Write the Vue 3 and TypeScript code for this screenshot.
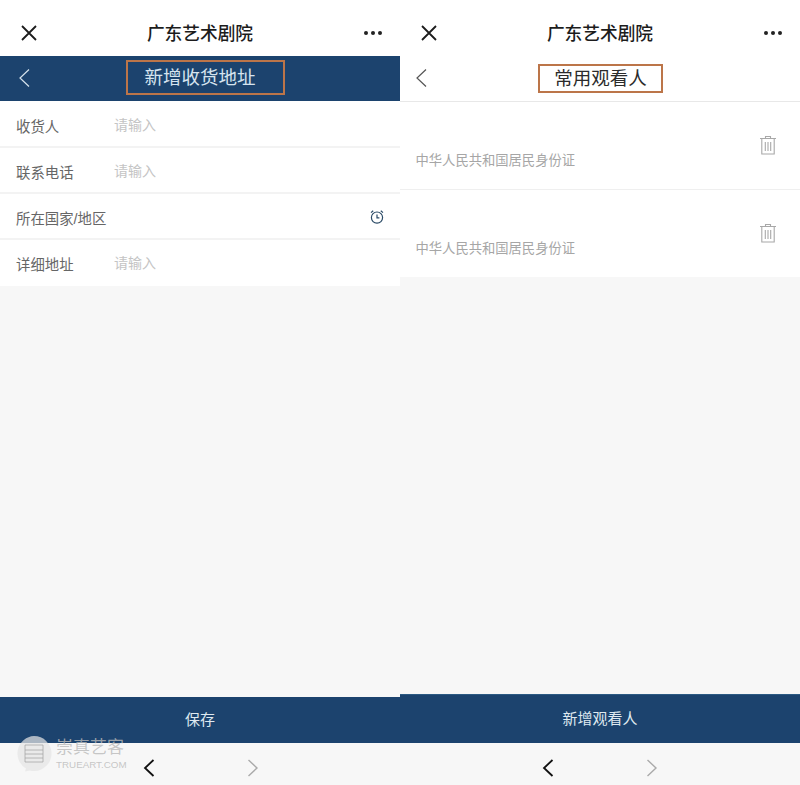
<template>
  <div class="page">
    <section class="panel">
      <div class="wx-bar">
        <svg class="wx-close" width="18" height="18" viewBox="0 0 18 18"><path d="M2 2l14 14M16 2L2 16" /></svg>
        <span class="wx-title">广东艺术剧院</span>
        <span class="wx-more"><i /><i /><i /></span>
      </div>
      <header class="head head-blue">
        <svg class="back" width="13" height="20" viewBox="0 0 13 20"><path d="M11 1.5L2 10l9 8.5" /></svg>
        <h1 class="head-title boxed boxed-blue">新增收货地址</h1>
      </header>
      <ul class="form">
        <li v-for="row in addressRows" :key="row.label" class="form-row">
          <span class="form-label">{{ row.label }}</span>
          <span v-if="row.input" class="form-input">请输入</span>
          <svg v-else class="clock" width="16" height="16" viewBox="0 0 16 16">
            <circle cx="8" cy="8.6" r="5.6" />
            <path d="M8 5.600v3.200h2.400M2 3.600l2.200-1.800M14 3.600l-2.200-1.800" />
          </svg>
        </li>
      </ul>
      <div class="fill" />
      <button class="action action-save">保存</button>
      <nav class="browser-nav browser-nav-left">
        <svg class="nav-arrow" width="14" height="20" viewBox="0 0 14 20"><path d="M11.500 2L3 10l8.500 8" /></svg>
        <svg class="nav-arrow off" width="14" height="20" viewBox="0 0 14 20"><path d="M2.500 2L11 10l-8.500 8" /></svg>
      </nav>
      <div class="watermark">
        <svg class="wm-bubble" width="38" height="38" viewBox="0 0 38 38">
          <path class="wm-shape" d="M19 1a17.500 17.500 0 1 1 0 35c-2 0-3 0-4-.500-2 0-4 1-5 1l1-3A17.500 17.500 0 0 1 19 1z" />
          <path class="wm-lines" d="M10 10h18v17H10zM10 15h18M10 19h18M10 23h18" />
        </svg>
        <div class="wm-text">
          <span class="wm-name">崇真艺客</span>
          <span class="wm-site">TRUEART.COM</span>
        </div>
      </div>
    </section>

    <section class="panel">
      <div class="wx-bar">
        <svg class="wx-close" width="18" height="18" viewBox="0 0 18 18"><path d="M2 2l14 14M16 2L2 16" /></svg>
        <span class="wx-title">广东艺术剧院</span>
        <span class="wx-more"><i /><i /><i /></span>
      </div>
      <header class="head head-white">
        <svg class="back" width="13" height="20" viewBox="0 0 13 20"><path d="M11 1.500L2 10l9 8.500" /></svg>
        <h1 class="head-title boxed boxed-white">常用观看人</h1>
      </header>
      <ul class="people">
        <li v-for="n in 2" :key="n" class="person">
          <span class="person-id">中华人民共和国居民身份证</span>
          <svg class="trash" width="18" height="20" viewBox="0 0 18 20">
            <path d="M1 3.500h16M6.500 3.500V1.500h5v2M2.800 3.500V19h12.400V3.500M6.300 7v9M9 7v9M11.700 7v9" />
          </svg>
        </li>
      </ul>
      <div class="fill" />
      <button class="action action-add">新增观看人</button>
      <nav class="browser-nav">
        <svg class="nav-arrow" width="14" height="20" viewBox="0 0 14 20"><path d="M11.500 2L3 10l8.500 8" /></svg>
        <svg class="nav-arrow off" width="14" height="20" viewBox="0 0 14 20"><path d="M2.500 2L11 10l-8.500 8" /></svg>
      </nav>
    </section>
  </div>
</template>

<script setup lang="ts">
interface AddressRow {
  label: string
  input: boolean
}

const addressRows: AddressRow[] = [
  { label: '收货人', input: true },
  { label: '联系电话', input: true },
  { label: '所在国家/地区', input: false },
  { label: '详细地址', input: true }
]
</script>

<style>
body {
  background: #fff;
}
</style>

<style scoped>
.page {
  display: flex;
  width: 800px;
  height: 785px;
  overflow: hidden;
  font-family: "Liberation Sans", "Noto Sans CJK SC", sans-serif;
}

.panel {
  position: relative;
  display: flex;
  flex-direction: column;
  width: 400px;
  height: 785px;
  background: #f7f7f7;
}

.wx-bar {
  display: flex;
  align-items: center;
  justify-content: center;
  position: relative;
  height: 56px;
  flex: none;
  background: #fff;
  padding-top: 8px;
  box-sizing: border-box;
}

.wx-close {
  position: absolute;
  left: 20px;
  top: 24px;
}

.wx-close path {
  fill: none;
  stroke: #1c1c1c;
  stroke-width: 1.8;
}

.wx-title {
  font-size: 17.700px;
  font-weight: 500;
  color: #1c1c1c;
}

.wx-more {
  position: absolute;
  right: 18px;
  top: 31px;
  display: flex;
  gap: 3px;
}

.wx-more i {
  width: 4px;
  height: 4px;
  border-radius: 50%;
  background: #222;
}

.head {
  position: relative;
  display: flex;
  align-items: center;
  justify-content: center;
  flex: none;
  height: 45px;
  box-sizing: border-box;
}

.head-blue {
  background: #1c436e;
}

.head-white {
  background: #fff;
  border-bottom: 1px solid #e8e8e8;
  height: 46px;
}

.back {
  position: absolute;
  left: 18px;
  top: 12px;
}

.back path {
  fill: none;
  stroke-width: 1.2;
}

.head-blue .back path {
  stroke: #d5e2ec;
}

.head-white .back path {
  stroke: #555;
}

.head-white .back {
  left: 15px;
}

.head-title {
  margin: 0;
  font-size: 18.500px;
  font-weight: 400;
  box-sizing: border-box;
  text-align: center;
}

.boxed {
  border: 2px solid #bc7549;
}

.boxed-blue {
  width: 159px;
  height: 35px;
  line-height: 32px;
  color: #d6e4ef;
  margin: -2px 0 0 10px;
  padding-right: 10px;
}

.boxed-white {
  width: 125px;
  height: 29px;
  line-height: 26px;
  color: #2b2b2b;
  margin-left: 1px;
}

.form {
  margin: 0;
  padding: 0;
  list-style: none;
  flex: none;
  background: #fff;
}

.form-row {
  display: flex;
  align-items: center;
  height: 46px;
  padding: 0 15px 0 16px;
  border-bottom: 2px solid #f3f3f3;
  box-sizing: border-box;
}

.form-row:first-child {
  height: 47px;
  padding-top: 1px;
}

.form-row:last-child {
  border-bottom: 0;
  padding-bottom: 2px;
}

.form-label {
  width: 98px;
  font-size: 14.400px;
  color: #666;
  white-space: nowrap;
  padding-top: 2px;
}

.form-input {
  font-size: 14px;
  color: #c4c4c4;
  margin-top: -1px;
}

.clock {
  margin-left: auto;
  margin-top: 1px;
}

.clock circle,
.clock path {
  fill: none;
  stroke: #2a4a66;
  stroke-width: 1.2;
}

.fill {
  flex: 1;
}

.action {
  flex: none;
  display: block;
  width: 100%;
  border: 0;
  padding: 0;
  background: #1c436e;
  color: #dfe9f0;
  font: inherit;
  font-size: 15px;
}

.action-save {
  height: 46px;
  padding-bottom: 3px;
}

.action-add {
  height: 49px;
  padding-bottom: 4px;
  border-top: 1px solid #2c5a83;
}

.browser-nav {
  flex: none;
  display: flex;
  justify-content: center;
  gap: 90px;
  align-items: center;
  height: 42px;
  padding-top: 7px;
  box-sizing: border-box;
  background: #f7f7f7;
}

.browser-nav-left {
  padding-left: 2px;
}

.nav-arrow path {
  fill: none;
  stroke: #111;
  stroke-width: 1.8;
}

.nav-arrow.off path {
  stroke: #aaa;
  stroke-width: 1.4;
}

.people {
  margin: 0;
  padding: 0;
  list-style: none;
  flex: none;
  background: #fff;
}

.person {
  position: relative;
  display: flex;
  align-items: flex-end;
  height: 88px;
  padding: 0 16px 19px 15.500px;
  box-sizing: border-box;
  border-bottom: 1px solid #efefef;
}

.person:last-child {
  border-bottom: 0;
  height: 87px;
}

.person-id {
  font-size: 13.300px;
  color: #a6a6a6;
  line-height: 18px;
}

.trash {
  position: absolute;
  right: 23px;
  top: 33px;
}

.trash path {
  fill: none;
  stroke: #a8a8a8;
  stroke-width: 1.1;
}

.watermark {
  position: absolute;
  left: 15px;
  top: 735px;
  display: flex;
  align-items: flex-start;
  gap: 3px;
}

.wm-shape {
  fill: rgba(228, 228, 228, 0.72);
}

.wm-lines {
  fill: none;
  stroke: rgba(160, 160, 160, 0.7);
  stroke-width: 1;
}

.wm-text {
  display: flex;
  flex-direction: column;
  margin-top: 2px;
}

.wm-name {
  font-size: 17px;
  line-height: 21px;
  color: rgba(185, 185, 185, 0.8);
}

.wm-site {
  font-size: 9.800px;
  line-height: 14px;
  color: rgba(185, 185, 185, 0.8);
}
</style>
